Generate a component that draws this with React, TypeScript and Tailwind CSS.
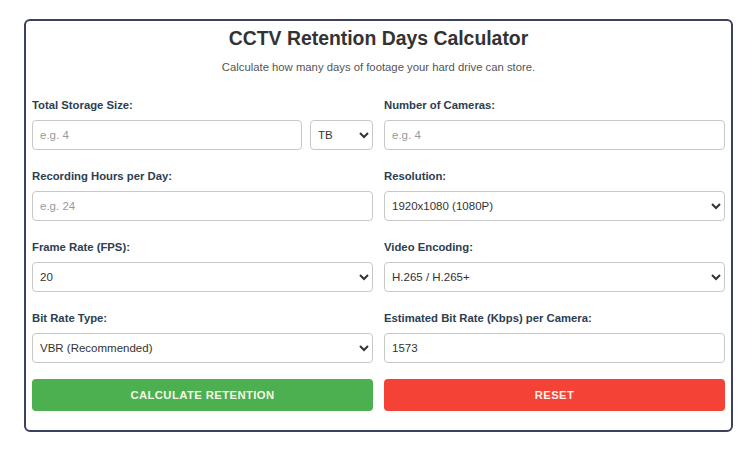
import React from 'react'

const font = { fontFamily: '"Liberation Sans", Arial, sans-serif' }

const labelCls = 'block text-[11.3px] leading-[16px] font-bold text-[#2c3e50] mb-[7px]'
const inputCls =
    'h-[30px] w-full rounded-[4px] border-[1.5px] border-[#c8c8c8] bg-white px-[7px] text-[11.5px] text-[#333] placeholder:text-[#9a9a9a] outline-none'
const selectCls =
    'h-[30px] w-full rounded-[4px] border-[1.5px] border-[#c8c8c8] bg-white px-[3px] text-[11.5px] text-[#333] outline-none'

function Field({ label, children }: { label: string; children: React.ReactNode }) {
    return (
        <div>
            <label className={labelCls}>{label}</label>
            {children}
        </div>
    )
}

export default function App() {
    return (
        <div className="min-h-[450px] bg-white pt-[19px] pl-[24px] pr-[22px]" style={font}>
            <div className="rounded-[6px] border-2 border-[#3d4160] px-[6px] pt-[5px] pb-[19px]">
                <h1 className="text-center text-[19.4px] leading-[24px] font-bold text-[#333]">
                    CCTV Retention Days Calculator
                </h1>
                <p className="mt-[9px] text-center text-[11.3px] leading-[16px] text-[#555]">
                    Calculate how many days of footage your hard drive can store.
                </p>

                <div className="mt-[22px] grid grid-cols-2 gap-x-[11px] gap-y-[18px]">
                    <Field label="Total Storage Size:">
                        <div className="flex gap-[8px]">
                            <input className={inputCls + ' flex-1'} placeholder="e.g. 4" />
                            <select className={selectCls + ' !w-[63px] shrink-0'} defaultValue="TB">
                                <option>GB</option>
                                <option>TB</option>
                            </select>
                        </div>
                    </Field>
                    <Field label="Number of Cameras:">
                        <input className={inputCls} placeholder="e.g. 4" />
                    </Field>

                    <Field label="Recording Hours per Day:">
                        <input className={inputCls} placeholder="e.g. 24" />
                    </Field>
                    <Field label="Resolution:">
                        <select className={selectCls} defaultValue="1080">
                            <option value="720">1280x720 (720P)</option>
                            <option value="1080">1920x1080 (1080P)</option>
                            <option value="4k">3840x2160 (4K)</option>
                        </select>
                    </Field>

                    <Field label="Frame Rate (FPS):">
                        <select className={selectCls} defaultValue="20">
                            <option>15</option>
                            <option>20</option>
                            <option>25</option>
                            <option>30</option>
                        </select>
                    </Field>
                    <Field label="Video Encoding:">
                        <select className={selectCls} defaultValue="h265">
                            <option value="h264">H.264</option>
                            <option value="h265">H.265 / H.265+</option>
                        </select>
                    </Field>

                    <Field label="Bit Rate Type:">
                        <select className={selectCls} defaultValue="vbr">
                            <option value="vbr">VBR (Recommended)</option>
                            <option value="cbr">CBR</option>
                        </select>
                    </Field>
                    <Field label="Estimated Bit Rate (Kbps) per Camera:">
                        <input className={inputCls} defaultValue="1573" />
                    </Field>
                </div>

                <div className="mt-[16px] grid grid-cols-2 gap-x-[11px]">
                    <button className="h-[32px] rounded-[4px] bg-[#4caf50] text-[11.3px] font-bold uppercase tracking-[0.4px] text-[#f3f8e6]">
                        Calculate Retention
                    </button>
                    <button className="h-[32px] rounded-[4px] bg-[#f44336] text-[11.3px] font-bold uppercase tracking-[0.4px] text-[#fdf0ee]">
                        Reset
                    </button>
                </div>
            </div>
        </div>
    )
}
